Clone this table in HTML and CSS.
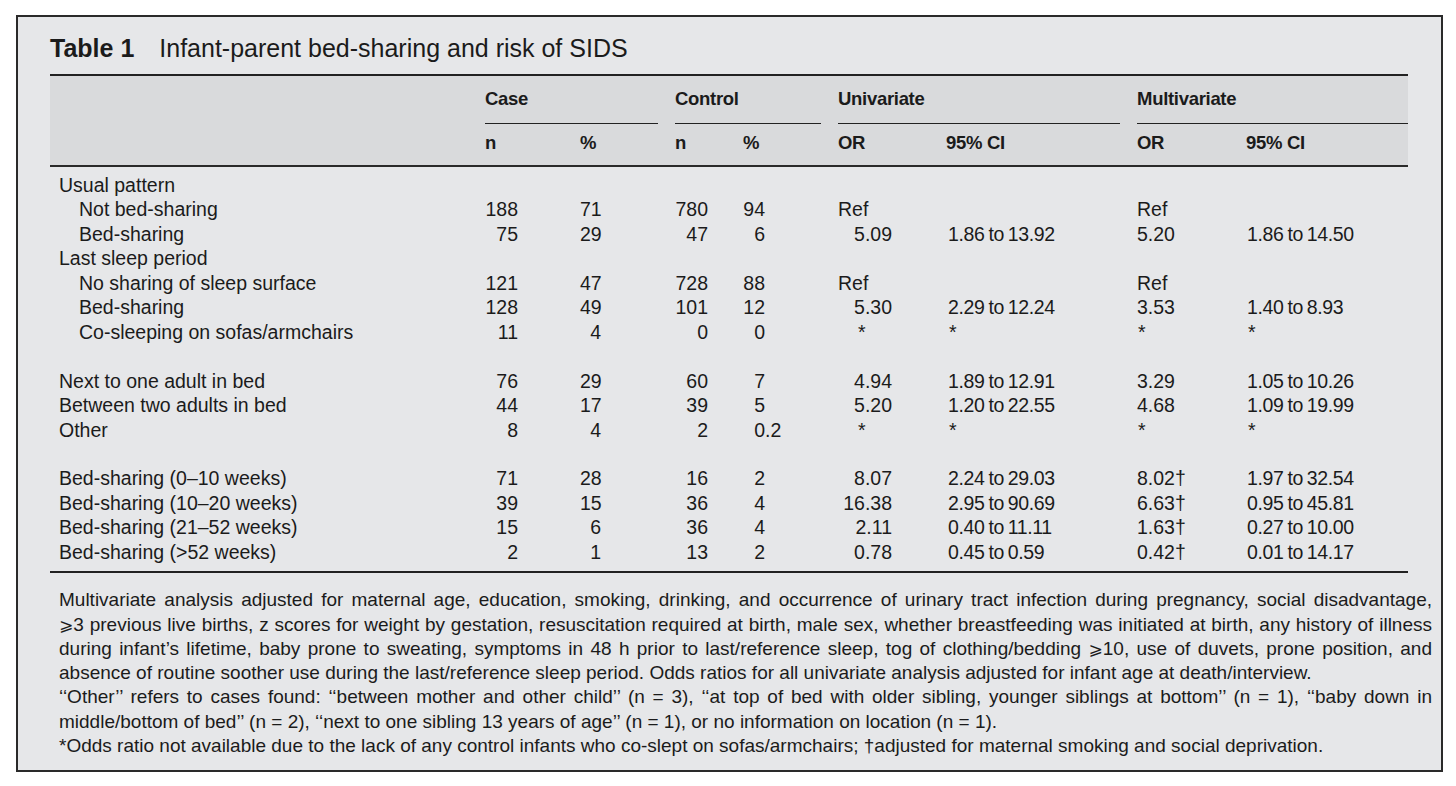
FILE: index.html
```html
<!DOCTYPE html>
<html lang="en">
<head>
<meta charset="utf-8">
<title>Table 1 Infant-parent bed-sharing and risk of SIDS</title>
<link rel="stylesheet" href="styles.css">
</head>
<body>
<div class="card">
  <h1 class="title"><b class="num">Table 1</b><span class="cap">Infant-parent bed-sharing and risk of SIDS</span></h1>
  <table class="data">
    <colgroup>
      <col class="w-lab"><col class="w-cn"><col class="w-cp"><col class="w-kn"><col class="w-kp"><col class="w-uo"><col class="w-uc"><col class="w-mo"><col class="w-mc">
    </colgroup>
    <thead>
      <tr class="group">
        <th></th>
        <th colspan="2" class="g"><div class="gl">Case</div></th>
        <th colspan="2" class="g"><div class="gl">Control</div></th>
        <th colspan="2" class="g"><div class="gl">Univariate</div></th>
        <th colspan="2" class="g last"><div class="gl">Multivariate</div></th>
      </tr>
      <tr class="sub">
        <th></th>
        <th>n</th><th>%</th><th>n</th><th>%</th><th>OR</th><th>95% CI</th><th>OR</th><th>95% CI</th>
      </tr>
    </thead>
    <tbody>
      <tr class="first"><td class="lab">Usual pattern</td><td></td><td></td><td></td><td></td><td></td><td></td><td></td><td></td></tr>
      <tr><td class="lab ind">Not bed-sharing</td><td class="cn">188</td><td class="cp">71</td><td class="kn">780</td><td class="kp"><span class="int">94</span></td><td class="uo ref">Ref</td><td class="uc"></td><td class="mo">Ref</td><td class="mc"></td></tr>
      <tr><td class="lab ind">Bed-sharing</td><td class="cn">75</td><td class="cp">29</td><td class="kn">47</td><td class="kp"><span class="int">6</span></td><td class="uo">5.09</td><td class="uc">1.86 to 13.92</td><td class="mo">5.20</td><td class="mc">1.86 to 14.50</td></tr>
      <tr><td class="lab">Last sleep period</td><td></td><td></td><td></td><td></td><td></td><td></td><td></td><td></td></tr>
      <tr><td class="lab ind">No sharing of sleep surface</td><td class="cn">121</td><td class="cp">47</td><td class="kn">728</td><td class="kp"><span class="int">88</span></td><td class="uo ref">Ref</td><td class="uc"></td><td class="mo">Ref</td><td class="mc"></td></tr>
      <tr><td class="lab ind">Bed-sharing</td><td class="cn">128</td><td class="cp">49</td><td class="kn">101</td><td class="kp"><span class="int">12</span></td><td class="uo">5.30</td><td class="uc">2.29 to 12.24</td><td class="mo">3.53</td><td class="mc">1.40 to 8.93</td></tr>
      <tr><td class="lab ind">Co-sleeping on sofas/armchairs</td><td class="cn">11</td><td class="cp">4</td><td class="kn">0</td><td class="kp"><span class="int">0</span></td><td class="uo star">*</td><td class="uc star">*</td><td class="mo star">*</td><td class="mc star">*</td></tr>
      <tr class="blank"><td colspan="9">&nbsp;</td></tr>
      <tr><td class="lab">Next to one adult in bed</td><td class="cn">76</td><td class="cp">29</td><td class="kn">60</td><td class="kp"><span class="int">7</span></td><td class="uo">4.94</td><td class="uc">1.89 to 12.91</td><td class="mo">3.29</td><td class="mc">1.05 to 10.26</td></tr>
      <tr><td class="lab">Between two adults in bed</td><td class="cn">44</td><td class="cp">17</td><td class="kn">39</td><td class="kp"><span class="int">5</span></td><td class="uo">5.20</td><td class="uc">1.20 to 22.55</td><td class="mo">4.68</td><td class="mc">1.09 to 19.99</td></tr>
      <tr><td class="lab">Other</td><td class="cn">8</td><td class="cp">4</td><td class="kn">2</td><td class="kp"><span class="int">0</span>.2</td><td class="uo star">*</td><td class="uc star">*</td><td class="mo star">*</td><td class="mc star">*</td></tr>
      <tr class="blank"><td colspan="9">&nbsp;</td></tr>
      <tr><td class="lab">Bed-sharing (0–10 weeks)</td><td class="cn">71</td><td class="cp">28</td><td class="kn">16</td><td class="kp"><span class="int">2</span></td><td class="uo">8.07</td><td class="uc">2.24 to 29.03</td><td class="mo">8.02†</td><td class="mc">1.97 to 32.54</td></tr>
      <tr><td class="lab">Bed-sharing (10–20 weeks)</td><td class="cn">39</td><td class="cp">15</td><td class="kn">36</td><td class="kp"><span class="int">4</span></td><td class="uo">16.38</td><td class="uc">2.95 to 90.69</td><td class="mo">6.63†</td><td class="mc">0.95 to 45.81</td></tr>
      <tr><td class="lab">Bed-sharing (21–52 weeks)</td><td class="cn">15</td><td class="cp">6</td><td class="kn">36</td><td class="kp"><span class="int">4</span></td><td class="uo">2.11</td><td class="uc">0.40 to 11.11</td><td class="mo">1.63†</td><td class="mc">0.27 to 10.00</td></tr>
      <tr class="lastrow"><td class="lab">Bed-sharing (&gt;52 weeks)</td><td class="cn">2</td><td class="cp">1</td><td class="kn">13</td><td class="kp"><span class="int">2</span></td><td class="uo">0.78</td><td class="uc">0.45 to 0.59</td><td class="mo">0.42†</td><td class="mc">0.01 to 14.17</td></tr>
    </tbody>
  </table>
  <div class="notes">
    <p class="para">
      <span class="ln jl">Multivariate analysis adjusted for maternal age, education, smoking, drinking, and occurrence of urinary tract infection during pregnancy, social disadvantage,</span>
      <span class="ln jl"><span class="ge">⩾</span>3 previous live births, z scores for weight by gestation, resuscitation required at birth, male sex, whether breastfeeding was initiated at birth, any history of illness</span>
      <span class="ln jl">during infant’s lifetime, baby prone to sweating, symptoms in 48 h prior to last/reference sleep, tog of clothing/bedding <span class="ge">⩾</span>10, use of duvets, prone position, and</span>
      <span class="ln">absence of routine soother use during the last/reference sleep period. Odds ratios for all univariate analysis adjusted for infant age at death/interview.</span>
    </p>
    <p class="para">
      <span class="ln jl">‘‘Other’’ refers to cases found: ‘‘between mother and other child’’ (n = 3), ‘‘at top of bed with older sibling, younger siblings at bottom’’ (n = 1), ‘‘baby down in</span>
      <span class="ln">middle/bottom of bed’’ (n = 2), ‘‘next to one sibling 13 years of age’’ (n = 1), or no information on location (n = 1).</span>
    </p>
    <p class="para">
      <span class="ln">*Odds ratio not available due to the lack of any control infants who co-slept on sofas/armchairs; †adjusted for maternal smoking and social deprivation.</span>
    </p>
  </div>
</div>
</body>
</html>
```
FILE: styles.css
```css
html, body {
  margin: 0;
  padding: 0;
  background: #ffffff;
}

body {
  font-family: "Liberation Sans", Arial, sans-serif;
  color: #1b1b1b;
  padding: 15px 0 0 16px;
}

.card {
  box-sizing: border-box;
  width: 1427px;
  background: #e6e7e9;
  border: 2px solid #2a2a2a;
  padding: 16px 33px 12px 32px;
}

.title {
  margin: 0 0 11px 0;
  font-size: 25px;
  line-height: 30px;
  font-weight: normal;
  white-space: nowrap;
}

.title .num {
  font-weight: bold;
  margin-right: 25px;
}

.data {
  width: 1358px;
  table-layout: fixed;
  border-collapse: separate;
  border-spacing: 0;
  border-top: 2px solid #222;
  border-bottom: 2px solid #222;
  font-size: 19.5px;
}

.w-lab { width: 435px; }
.w-cn { width: 95px; }
.w-cp { width: 95px; }
.w-kn { width: 68px; }
.w-kp { width: 95px; }
.w-uo { width: 108px; }
.w-uc { width: 191px; }
.w-mo { width: 109px; }
.w-mc { width: 162px; }

thead {
  background: #d9dadc;
}

thead th {
  font-weight: bold;
  text-align: left;
  padding: 0;
  font-size: 18.5px;
  letter-spacing: -0.3px;
}

.group th {
  padding-top: 11px;
  vertical-align: bottom;
}

.group th.g {
  padding-right: 17px;
}

.group th.g.last {
  padding-right: 0;
}

.gl {
  line-height: 24px;
  padding-bottom: 12px;
  border-bottom: 1.5px solid #222;
}

.sub th {
  line-height: 24px;
  padding-top: 7px;
  padding-bottom: 10px;
  border-bottom: 2px solid #2a2a2a;
}

tbody td {
  padding: 0;
  line-height: 24.45px;
  white-space: nowrap;
  text-align: left;
}

tbody tr.first td {
  padding-top: 6px;
}

tbody tr.lastrow td {
  padding-bottom: 7px;
}

td.lab { padding-left: 9px; }
td.lab.ind { padding-left: 29px; }

td.cn { text-align: right; padding-right: 62px; }
td.cp { text-align: right; padding-right: 74px; }
td.kn { text-align: right; padding-right: 35px; }
td.kp { padding-left: 0; }

.int {
  display: inline-block;
  width: 22px;
  text-align: right;
}

td.uo { text-align: right; padding-right: 54px; }
td.uo.ref { text-align: left; padding-right: 0; }
td.uo.star { text-align: left; padding-left: 20px; padding-right: 0; }
td.uc { padding-left: 2px; letter-spacing: -0.4px; word-spacing: -1px; }
td.uc.star { padding-left: 3px; }
td.mo { padding-left: 0; }
td.mo.star { padding-left: 1px; }
td.mc { padding-left: 1px; letter-spacing: -0.4px; word-spacing: -1px; }
td.mc.star { padding-left: 2px; }

.notes {
  padding: 15px 0 0 9px;
  width: 1373px;
  font-size: 19px;
  line-height: 24.3px;
}

.para {
  margin: 0;
}

.ln {
  display: block;
  white-space: nowrap;
}

.ln.jl {
  text-align: justify;
  text-align-last: justify;
}

.ge {
  font-family: "DejaVu Sans", sans-serif;
  font-size: 0.9em;
}
```
